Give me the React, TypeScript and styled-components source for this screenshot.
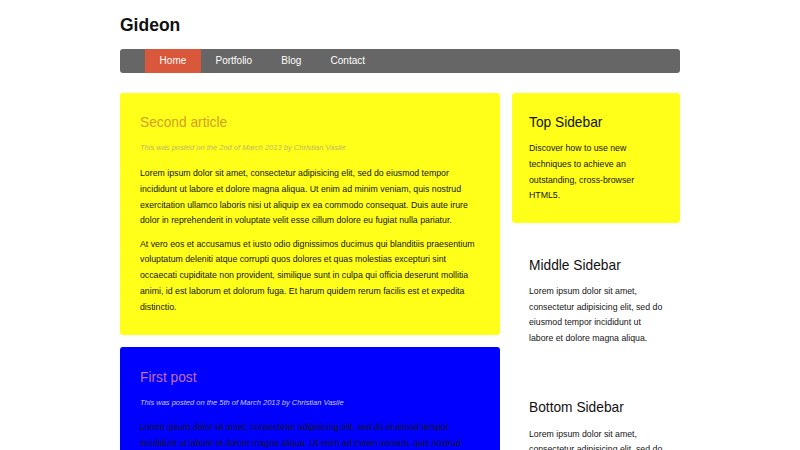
import React from "react";
import styled, { createGlobalStyle } from "styled-components";

const Global = createGlobalStyle`
  html, body { margin: 0; padding: 0; background: #fff; }
  body {
    font-family: "Liberation Sans", Arial, sans-serif;
    color: #222;
  }
  * { box-sizing: border-box; }
`;

const Page = styled.div`
  width: 560px;
  margin: 0 auto;
  padding-top: 14.6px;
`;

const SiteTitle = styled.h1`
  margin: 0;
  font-size: 17.5px;
  line-height: 20px;
  font-weight: bold;
  color: #111;
`;

const NavBar = styled.nav`
  margin-top: 14.4px;
  height: 24px;
  background: #666;
  border-radius: 3px;
  display: flex;
  padding-left: 25px;
`;

const NavItem = styled.a<{ $active?: boolean }>`
  display: block;
  padding: 0 14.6px;
  line-height: 24px;
  font-size: 10px;
  color: #fff;
  text-decoration: none;
  background: ${(p) => (p.$active ? "#d9583b" : "transparent")};
`;

const Layout = styled.div`
  margin-top: 20px;
  display: grid;
  grid-template-columns: 380px 168px;
  column-gap: 12px;
  align-items: start;
`;

const MainCol = styled.main`
  display: flex;
  flex-direction: column;
  gap: 12px;
`;

const Article = styled.article<{ $bg: string }>`
  background: ${(p) => p.$bg};
  border-radius: 3px;
  padding: 20.5px 20px 20px;
`;

const ArticleTitle = styled.h2<{ $color: string }>`
  margin: 0;
  font-size: 13.75px;
  line-height: 19px;
  font-weight: normal;
  color: ${(p) => p.$color};
`;

const Meta = styled.p<{ $color: string }>`
  margin: 8.8px 0 11.3px;
  font-size: 7.5px;
  line-height: 13.5px;
  font-style: italic;
  color: ${(p) => p.$color};
`;

const Para = styled.p`
  margin: 0 0 7.5px;
  font-size: 8.75px;
  line-height: 15.75px;
  color: #151515;
  &:last-child { margin-bottom: 0; }
`;

const SideCol = styled.aside`
  display: flex;
  flex-direction: column;
  gap: 12.5px;
`;

const SideBlock = styled.section<{ $bg?: string }>`
  background: ${(p) => p.$bg || "transparent"};
  border-radius: 3px;
  padding: 21px 14.5px 19px 17px;
`;

const SideTitle = styled.h3`
  margin: 0 0 9.4px;
  font-size: 13.75px;
  line-height: 18px;
  font-weight: normal;
  color: #111;
`;

const SideText = styled.p`
  margin: 0;
  font-size: 8.75px;
  line-height: 15.67px;
  color: #151515;
`;

const lorem1 =
  "Lorem ipsum dolor sit amet, consectetur adipisicing elit, sed do eiusmod tempor incididunt ut labore et dolore magna aliqua. Ut enim ad minim veniam, quis nostrud exercitation ullamco laboris nisi ut aliquip ex ea commodo consequat. Duis aute irure dolor in reprehenderit in voluptate velit esse cillum dolore eu fugiat nulla pariatur.";
const lorem2 =
  "At vero eos et accusamus et iusto odio dignissimos ducimus qui blanditiis praesentium voluptatum deleniti atque corrupti quos dolores et quas molestias excepturi sint occaecati cupiditate non provident, similique sunt in culpa qui officia deserunt mollitia animi, id est laborum et dolorum fuga. Et harum quidem rerum facilis est et expedita distinctio.";
const sideLorem =
  "Lorem ipsum dolor sit amet, consectetur adipisicing elit, sed do eiusmod tempor incididunt ut labore et dolore magna aliqua.";

const articles = [
  {
    title: "Second article",
    meta: "This was posted on the 2nd of March 2013 by Christian Vasile",
    bg: "#ffff19",
    titleColor: "#d39f22",
    metaColor: "#bdb766",
  },
  {
    title: "First post",
    meta: "This was posted on the 5th of March 2013 by Christian Vasile",
    bg: "#0000ff",
    titleColor: "#c16fc6",
    metaColor: "#c8c8f0",
  },
];

export default function App() {
  return (
    <>
      <Global />
      <Page>
        <SiteTitle>Gideon</SiteTitle>
        <NavBar>
          <NavItem href="#" $active>Home</NavItem>
          <NavItem href="#">Portfolio</NavItem>
          <NavItem href="#">Blog</NavItem>
          <NavItem href="#">Contact</NavItem>
        </NavBar>
        <Layout>
          <MainCol>
            {articles.map((a) => (
              <Article key={a.title} $bg={a.bg}>
                <ArticleTitle $color={a.titleColor}>{a.title}</ArticleTitle>
                <Meta $color={a.metaColor}>{a.meta}</Meta>
                <Para>{lorem1}</Para>
                <Para>{lorem2}</Para>
              </Article>
            ))}
          </MainCol>
          <SideCol>
            <SideBlock $bg="#ffff19">
              <SideTitle>Top Sidebar</SideTitle>
              <SideText>
                Discover how to use new techniques to achieve an outstanding,
                cross-browser HTML5.
              </SideText>
            </SideBlock>
            <SideBlock>
              <SideTitle>Middle Sidebar</SideTitle>
              <SideText>{sideLorem}</SideText>
            </SideBlock>
            <SideBlock>
              <SideTitle>Bottom Sidebar</SideTitle>
              <SideText>{sideLorem}</SideText>
            </SideBlock>
          </SideCol>
        </Layout>
      </Page>
    </>
  );
}
